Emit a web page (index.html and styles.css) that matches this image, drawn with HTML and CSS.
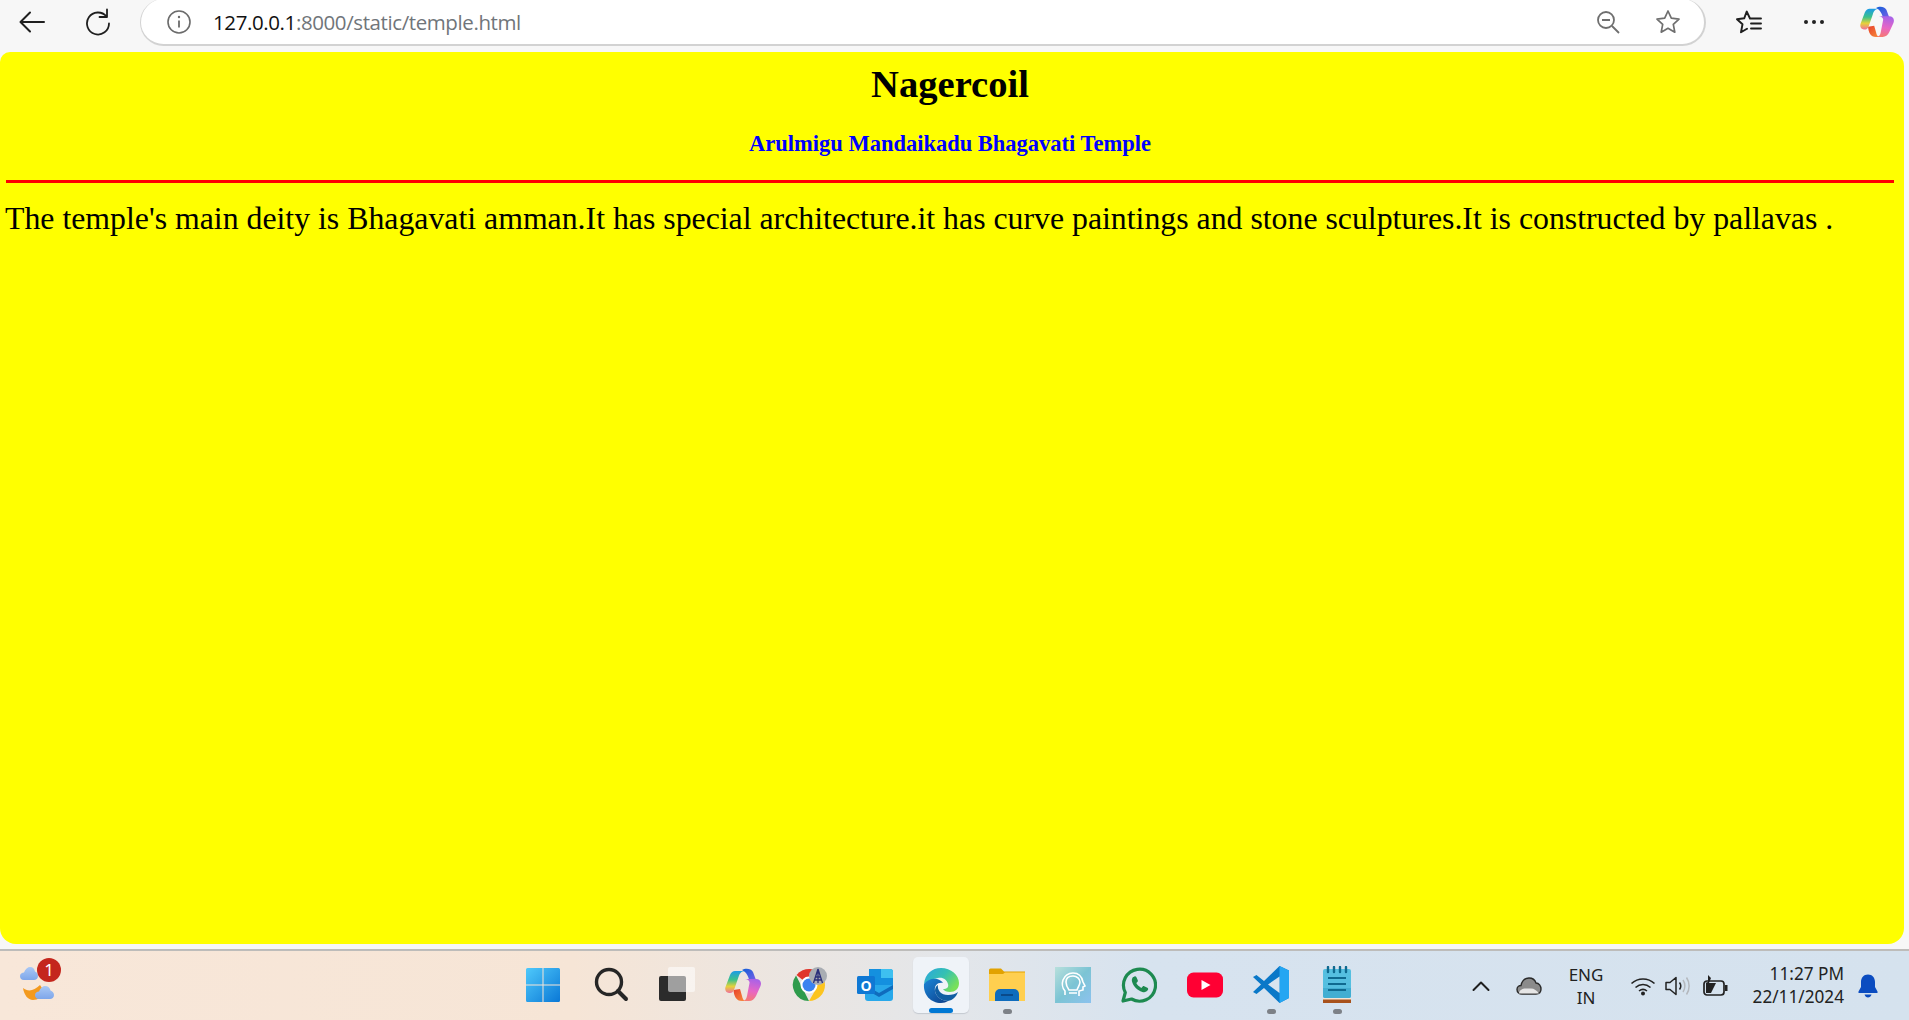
FILE: index.html
```html
<!DOCTYPE html>
<html lang="en">
<head>
<meta charset="utf-8">
<title>temple</title>
<link rel="stylesheet" href="styles.css">
</head>
<body>
<div class="screen">
  <header class="toolbar">
    <button class="tool back"><svg width="28" height="24" viewBox="0 0 28 24"><path d="M26 12H3M12 2.500 2.500 12l9.500 9.500" class="ln" stroke-width="2"/></svg></button>
    <button class="tool reload"><svg width="26" height="28" viewBox="0 0 26 28"><path d="M21.500 8.500A11 11 0 1 0 24 15.500M22 1.500v7.500h-7.500" class="ln" stroke-width="1.800"/></svg></button>
    <div class="address">
      <svg class="info" width="26" height="26" viewBox="0 0 26 26"><circle cx="13" cy="13" r="11" fill="none" stroke="#6b6b6b" stroke-width="1.600"/><path d="M13 11.500v7" stroke="#6b6b6b" stroke-width="1.800"/><circle cx="13" cy="8" r="1.200" fill="#6b6b6b"/></svg>
      <div class="url"><span class="host">127.0.0.1</span>:8000/static/temple.html</div>
      <svg class="zoomout" width="24" height="24" viewBox="0 0 24 24"><circle cx="10" cy="10" r="8" fill="none" stroke="#6f6f6f" stroke-width="1.800"/><path d="M6 10h8M16 16l7 7" stroke="#6f6f6f" stroke-width="1.800"/></svg>
      <svg class="star" width="26" height="26" viewBox="0 0 26 26"><path d="M13 2l3.300 7.200 7.700.9-5.700 5.300 1.500 7.800L13 19.300l-6.800 3.900 1.500-7.800L2 10.100l7.700-.9z" fill="none" stroke="#6f6f6f" stroke-width="1.700" stroke-linejoin="round"/></svg>
    </div>
    <svg class="favs" width="26" height="26" viewBox="0 0 26 26"><path d="M14 9.500 10.700 2.500 8.200 9.300 1 10.300l5.500 5-1.500 8 6-3.500M15 9.500h10M15 14.500h10M15 19.500h10" class="ln" stroke-width="1.900"/></svg>
    <svg class="more" width="22" height="6" viewBox="0 0 22 6"><circle cx="3" cy="3" r="2" fill="#222"/><circle cx="11" cy="3" r="2" fill="#222"/><circle cx="19" cy="3" r="2" fill="#222"/></svg>
    <svg class="copilot-top" width="34" height="31" viewBox="0 0 36 33">
      <defs>
        <linearGradient id="ca" x1="0" y1="0" x2="0" y2="1"><stop offset="0" stop-color="#1c9be8"/><stop offset=".4" stop-color="#3cc28a"/><stop offset=".7" stop-color="#e6d23a"/><stop offset="1" stop-color="#f0709a"/></linearGradient>
        <linearGradient id="cb" x1="0" y1="0" x2="1" y2="1"><stop offset="0" stop-color="#0d5fd8"/><stop offset="1" stop-color="#7a5fe6"/></linearGradient>
        <linearGradient id="cd" x1=".6" y1="0" x2=".4" y2="1"><stop offset="0" stop-color="#a862e8"/><stop offset=".55" stop-color="#e866c4"/><stop offset="1" stop-color="#f57a72"/></linearGradient>
        <linearGradient id="cc" x1="0" y1="0" x2="1" y2="1"><stop offset="0" stop-color="#e8402c"/><stop offset="1" stop-color="#f8903a"/></linearGradient>
      </defs>
      <path d="M17 2C20 0 26 0 28 4l3 8h-7c0-2-2-6-4-8z" fill="url(#cb)"/>
      <path d="M8.500 22C9 28 11 33 17 33h4c-2 0-3.500-2-4-5l-2-7z" fill="url(#cc)"/>
      <path d="M10 3h10c-4 0-5.500 3-6.500 6L9 22c-1 2-2 3-4 3H4c-3 0-4.500-3-3.500-6L5 7c1-2.500 3-4 5-4z" fill="url(#ca)"/>
      <path d="M20 11h11c4 0 6 3 4.500 7L31 28c-1.500 3-4 5-7 5H17c3 0 4.500-2 5-5l2.500-13c.5-2-2-4-4.500-4z" fill="url(#cd)"/>
    </svg>
  </header>

  <main class="viewport">
    <div class="page">
      <h1 class="title">Nagercoil</h1>
      <h3 class="subtitle">Arulmigu Mandaikadu Bhagavati Temple</h3>
      <hr class="rule">
      <p class="body-text">The temple's main deity is Bhagavati amman.It has special architecture.it has curve paintings and stone sculptures.It is constructed by pallavas .</p>
    </div>
  </main>

  <footer class="taskbar">
    <div class="widgets">
      <svg width="48" height="48" viewBox="0 0 48 48">
        <defs><linearGradient id="cl" x1="0" y1="0" x2="0" y2="1"><stop offset="0" stop-color="#a9c8f5"/><stop offset="1" stop-color="#7ea6ea"/></linearGradient></defs>
        <path d="M7 27c5 4 11 3 17-3l4 6c-2 6-6 9-11 9-5 0-9-5-10-12z" fill="#f39a1f"/>
        <path d="M8 19C5 19 4 17 4 15c0-2 2-3.500 4-3.500C9 8 12 6 14 6c3 0 4.500 2 5 4.500 2 .5 3 2.500 3 4.500 0 2.500-2 4-4 4z" fill="url(#cl)"/>
        <path d="M23 38c-3 0-4-2-4-4 0-2 2-3.500 4-3.500C24 27 27 25 29 25c3 0 5 2 5.500 4.500 2 .5 3.500 2.500 3.500 4.500 0 2.500-2 4-4 4z" fill="url(#cl)"/>
      </svg>
      <span class="badge">1</span>
    </div>
    <ul class="apps">
      <li class="app">
        <svg width="36" height="36" viewBox="0 0 36 36"><defs><linearGradient id="w" x1="0" y1="0" x2="1" y2="1"><stop offset="0" stop-color="#4fc9fb"/><stop offset="1" stop-color="#0a78d6"/></linearGradient></defs><path d="M1 2.500A1.500 1.500 0 0 1 2.500 1H17.500V17.500H1zM18.500 1H33.500A1.500 1.500 0 0 1 35 2.500V17.500H18.500zM1 18.500H17.500V35H2.500A1.500 1.500 0 0 1 1 33.500zM18.500 18.500H35V33.500A1.500 1.500 0 0 1 33.500 35H18.500z" fill="url(#w)"/></svg>
      </li>
      <li class="app">
        <svg width="36" height="36" viewBox="0 0 36 36"><circle cx="16" cy="15" r="12.500" fill="none" stroke="#262626" stroke-width="3.400"/><path d="M25 24l8 8" stroke="#262626" stroke-width="4" stroke-linecap="round"/></svg>
      </li>
      <li class="app">
        <svg width="36" height="36" viewBox="0 0 36 36"><rect x="0" y="9" width="27" height="25" rx="2" fill="#2b2b2b"/><rect x="9" y="0" width="27" height="25" rx="2" fill="#fff" fill-opacity=".55"/></svg>
      </li>
      <li class="app">
        <svg width="36" height="33" viewBox="0 0 36 33"><path d="M17 2C20 0 26 0 28 4l3 8h-7c0-2-2-6-4-8z" fill="url(#cb)"/><path d="M8.500 22C9 28 11 33 17 33h4c-2 0-3.500-2-4-5l-2-7z" fill="url(#cc)"/><path d="M10 3h10c-4 0-5.500 3-6.500 6L9 22c-1 2-2 3-4 3H4c-3 0-4.500-3-3.500-6L5 7c1-2.500 3-4 5-4z" fill="url(#ca)"/><path d="M20 11h11c4 0 6 3 4.500 7L31 28c-1.500 3-4 5-7 5H17c3 0 4.500-2 5-5l2.500-13c.5-2-2-4-4.500-4z" fill="url(#cd)"/></svg>
      </li>
      <li class="app">
        <svg width="36" height="36" viewBox="0 0 36 36"><path d="M18 18 5.500 8A16 16 0 0 1 32 10z" fill="#e0352b"/><path d="M18 18h16A16 16 0 0 1 18 34l7-12z" fill="#fcc41f"/><path d="M18 34A16 16 0 0 1 5 8.500L12 22z" fill="#2e9b4c"/><path d="M18 18 32 10A16 16 0 0 1 34 18z" fill="#fcc41f"/><circle cx="18" cy="18" r="8.500" fill="#fff"/><circle cx="18" cy="18" r="6.500" fill="#3b82f0"/><circle cx="27" cy="9" r="9" fill="#a9adb3"/><path d="M27 2 22.500 16M27 2l4.500 14M24.500 10h5M23.500 13h7M27 2v14" stroke="#2b2f7a" stroke-width="1.300" fill="none"/></svg>
      </li>
      <li class="app">
        <svg width="36" height="36" viewBox="0 0 36 36"><path d="M12 2h21a3 3 0 0 1 3 3v14H12z" fill="#1490df"/><path d="M24 2h9a3 3 0 0 1 3 3v6H24z" fill="#3ec0f0"/><path d="M8 18h28v13a3 3 0 0 1-3 3H11a3 3 0 0 1-3-3z" fill="#28a8ea"/><path d="M8 18l14 8 14-8v4L22 30 8 22z" fill="#0f6cbd"/><rect x="0" y="9" width="18" height="18" rx="1.500" fill="#0f78d4"/><text x="9" y="23.500" class="o-mark">O</text></svg>
      </li>
      <li class="app active">
        <svg width="36" height="36" viewBox="0 0 36 36"><defs><linearGradient id="e1" x1="0" y1="0" x2="1" y2=".6"><stop offset="0" stop-color="#2aa6e0"/><stop offset=".55" stop-color="#35c1b1"/><stop offset="1" stop-color="#78e05a"/></linearGradient><linearGradient id="e2" x1="0" y1="0" x2="1" y2="1"><stop offset="0" stop-color="#1b86d8"/><stop offset="1" stop-color="#0c3f8a"/></linearGradient></defs><path d="M1 17C2 7 9 1 18 1c10 0 18 7 18 15 0 6-4 9-9 9-3 0-6-1-7-3 4 0 6-2 5-5-1-4-5-7-10-6C9 12 4 14 1 17z" fill="url(#e1)"/><path d="M1 17c3-4 8-6 13-5 3 1 5 2 6 4-5-1-9 2-8 8 1 6 7 10 13 10-2 1-4 2-7 2C8 36 0 28 1 17z" fill="url(#e2)"/><path d="M25 34c-6 0-12-4-13-10 0-3 1-5 3-6-1 5 3 10 10 10 4 0 8-1 10-3-2 5-5 8-10 9z" fill="#115ea3"/></svg>
      </li>
      <li class="app running">
        <svg width="36" height="36" viewBox="0 0 36 36"><path d="M0 3a1.500 1.500 0 0 1 1.500-1.500H12l3 3H36V34H0z" fill="#e2a200"/><path d="M0 7h14l2-1.500h20V34H0z" fill="#ffcf4f"/><path d="M6 34V27a5 5 0 0 1 5-5h14a5 5 0 0 1 5 5v7z" fill="#0f6cbd"/><path d="M12 28h12" stroke="#0a3f7a" stroke-width="1.500"/></svg>
      </li>
      <li class="app">
        <svg width="36" height="36" viewBox="0 0 36 36"><defs><linearGradient id="t" x1="0" y1="0" x2="1" y2="1"><stop offset="0" stop-color="#b8e0dc"/><stop offset=".5" stop-color="#7cc4d4"/><stop offset="1" stop-color="#8cc2ee"/></linearGradient></defs><rect width="36" height="36" fill="url(#t)"/><path d="M10 28V24C7 21 7 16 8 13c2-5 6-7 10-7 6 0 9 4 10 9l2 4-2 1v3l-4 1v5" fill="none" stroke="#fff" stroke-width="1.600"/><path d="M14 23c-2-3-3-5-3-8 0-4 3-6 7-6s7 3 7 6c0 3-2 5-3 8zM14 23h8M14 26h8" fill="none" stroke="#fff" stroke-width="1.600"/></svg>
      </li>
      <li class="app">
        <svg width="36" height="36" viewBox="0 0 36 36"><path d="M2 34l2.300-8.500A16 16 0 1 1 10.500 32z" fill="none" stroke="#1d8a50" stroke-width="3.200" stroke-linejoin="round"/><path d="M12.500 10c1-1 2.300-1 2.800 0l1.500 3.300c.2.600 0 1.200-.4 1.600l-1.100 1.200c1 2 2.800 3.700 5 4.800l1.400-1.400c.4-.4 1-.5 1.500-.3l3.200 1.500c.9.400 1 1.500.4 2.400-1.300 1.900-3.200 2.500-5.500 1.800-5-1.500-9-5.500-10.300-10.400-.5-1.800.2-3.400 1-4.500z" fill="#1d8a50"/></svg>
      </li>
      <li class="app">
        <svg width="36" height="26" viewBox="0 0 36 26"><rect y=".5" width="36" height="25" rx="6.500" fill="#ff0033"/><path d="M14.500 8v10l9-5z" fill="#fff"/></svg>
      </li>
      <li class="app running">
        <svg width="36" height="37" viewBox="0 0 36 37"><path d="M26.500 0 36 4.500V32l-9.500 5L11 22l-7.500 6L0 26l8-7.500L0 11l3.500-2 7.500 6z" fill="#0a78c8"/><path d="M26.500 0 36 4.500V32l-9.500 5z" fill="#24a6f2"/><path d="M26.500 10.500 15 18.500l11.500 8.500z" fill="#d8e4ef"/></svg>
      </li>
      <li class="app running">
        <svg width="28" height="37" viewBox="0 0 28 37"><rect x="0" y="3" width="28" height="29" rx="2" fill="#55bfe0"/><path d="M0 22h28v8a2 2 0 0 1-2 2H2a2 2 0 0 1-2-2z" fill="#42aed2"/><rect y="32" width="28" height="5" fill="#a8521c"/><rect y="32" width="28" height="1.500" fill="#f2e4d4"/><path d="M5 1v5M11 1v5M17 1v5M23 1v5" stroke="#0f6a90" stroke-width="2.400" stroke-linecap="round"/><path d="M5 12h18M5 18h18M5 24h18" stroke="#0f6a90" stroke-width="2"/></svg>
      </li>
    </ul>
    <div class="tray">
      <svg class="chevron" width="18" height="12" viewBox="0 0 18 12"><path d="M1.500 10 9 2.500 16.500 10" class="ln" stroke-width="2"/></svg>
      <svg class="cloud" width="26" height="18" viewBox="0 0 26 18"><path d="M6 17C3 17 1 15 1 12.500S3 8.500 5 8.500C6 4 9 1 13 1c3 0 6 2 7 5 3 0 5 3 5 6 0 3-2 5-5 5z" fill="#8b8b8b" stroke="#2a2a2a" stroke-width="1.400"/><path d="M3 16.500c0-3 3-5 7-5h5c3 0 6 2 8 5z" fill="#e6e6e6"/></svg>
      <div class="lang"><span>ENG</span><span>IN</span></div>
      <svg class="wifi" width="26" height="20" viewBox="0 0 26 20"><path d="M1.500 7.500c6.500-6 16.500-6 23 0M5.500 11.500c4.500-4 10.500-4 15 0M9 15c2.500-2 5.500-2 8 0" fill="none" stroke="#222" stroke-width="1.600"/><circle cx="13" cy="17.500" r="2" fill="#222"/></svg>
      <svg class="sound" width="26" height="22" viewBox="0 0 26 22"><path d="M1 7.500h4L11 2.500v17l-6-5H1z" fill="none" stroke="#222" stroke-width="1.500" stroke-linejoin="round"/><path d="M14.500 7.500c1.500 2 1.500 5 0 7" fill="none" stroke="#222" stroke-width="1.500"/><path d="M18 5c2.500 3.500 2.500 8.500 0 12M21.500 2.500c3.500 5 3.500 12 0 17" fill="none" stroke="#b4b8bd" stroke-width="1.500"/></svg>
      <svg class="battery" width="26" height="22" viewBox="0 0 26 22"><rect x="1" y="6" width="20" height="14" rx="3" fill="none" stroke="#222" stroke-width="1.700"/><path d="M22 10h2.500v6H22z" fill="#222"/><path d="M3 18V8h10l-5 10z" fill="#222"/><path d="M5 0v7l-3 1 4 0 2-5z" fill="#222"/></svg>
      <div class="clock"><span>11:27 PM</span><span>22/11/2024</span></div>
      <svg class="bell" width="20" height="24" viewBox="0 0 20 24"><path d="M10 .500c-4.500 0-7 3.500-7 7.500v5L.5 17.500V19h19v-1.500L17 13V8c0-4-2.500-7.500-7-7.500z" fill="#0b4cc0"/><path d="M6.500 20.500h7c-.5 2-2 3-3.500 3s-3-1-3.500-3z" fill="#0b4cc0"/></svg>
    </div>
  </footer>
</div>
</body>
</html>
```

FILE: styles.css
```css
* { box-sizing: border-box; }
html, body { margin: 0; padding: 0; height: 100%; overflow: hidden; }
.screen { display: flex; flex-direction: column; height: 1020px; background: #f7f7f7; }
.ln { fill: none; stroke: #1f1f1f; stroke-linejoin: round; stroke-linecap: round; }

.toolbar { height: 52px; flex: none; display: flex; align-items: flex-start; background: #f7f7f7; }
.tool { border: 0; background: none; padding: 0; display: flex; align-items: center; justify-content: center; height: 44px; width: 40px; }
.back { margin-left: 12px; }
.reload { margin-left: 26px; }
.address { width: 1566px; height: 47px; margin-left: 22px; margin-top: -1px; display: flex; align-items: center; background: #fff; border: 2px solid #d2d2d2; border-top: 0; border-left-width: 1.500px; border-radius: 24px; padding-left: 25px; }
.url { font: 20.500px/44px "Open Sans", sans-serif; color: #70757a; margin-left: 21px; letter-spacing: -.4px; flex: 1; }
.host { color: #111; }
.zoomout { margin-right: 35px; }
.star { margin-right: 23px; }
.favs { margin-left: 30px; margin-top: 9px; }
.more { margin-left: 41px; margin-top: 19px; }
.copilot-top { margin-left: 35px; margin-top: 6px; }

.viewport { height: 899px; flex: none; padding-right: 5px; border-bottom: 2px solid #bdbcba; }
.page { height: 892px; background: #ff0; border-radius: 0 0 16px 16px; border-top-left-radius: 10px; border-top-right-radius: 14px; padding: 10px 10px 0 6px; font-family: "Liberation Serif", "Times New Roman", serif; color: #000; overflow: hidden; }
.title { margin: 0; font-size: 38.600px; line-height: 44px; font-weight: 700; text-align: center; }
.subtitle { margin: 25px 0 0; font-size: 22.500px; line-height: 26px; font-weight: 700; text-align: center; color: #00f; }
.rule { margin: 23px 0 0; height: 3px; border: 0; background: #f00; }
.body-text { margin: 19px 0 0 -1px; font-size: 31.800px; line-height: 34px; white-space: nowrap; }

.taskbar { flex: 1; display: flex; align-items: center; background: linear-gradient(90deg, #f8e7d9 0%, #f6e5d6 30%, #e3e6ea 50%, #d7e3ef 60%, #d5e2ee 100%); }
.widgets { width: 510px; flex: none; height: 100%; position: relative; padding: 10px 0 0 16px; }
.badge { position: absolute; left: 37px; top: 7px; width: 24px; height: 24px; border-radius: 50%; background: #c4261d; color: #fff; font: 17px/24px "Noto Sans", sans-serif; text-align: center; }
.apps { list-style: none; margin: 0; padding: 0; display: flex; flex: none; }
.app { width: 66px; height: 69px; padding-bottom: 2px; display: flex; align-items: center; justify-content: center; position: relative; }
.app:first-child { width: 68px; padding-right: 2px; }
.running::after { content: ""; position: absolute; left: 29px; bottom: 6px; width: 9px; height: 5px; border-radius: 3px; background: #7d8187; }
.active::before { content: ""; position: absolute; left: 5px; top: 6px; width: 56px; height: 56px; border-radius: 5px; background: #eff3f8; box-shadow: 0 1px 1px #c4c9d0; }
.active::after { content: ""; position: absolute; left: 21px; bottom: 7px; width: 24px; height: 5px; border-radius: 3px; background: #0078d4; }
.active svg { position: relative; }
.o-mark { font: 700 14px "Open Sans", sans-serif; fill: #fff; text-anchor: middle; }

.tray { flex: 1; display: flex; align-items: center; height: 100%; }
.chevron { margin-left: 102px; }
.cloud { margin-left: 26px; }
.lang { display: flex; flex-direction: column; align-items: center; width: 44px; margin-left: 22px; font: 17px/23px "Noto Sans", sans-serif; color: #222; }
.wifi { margin-left: 22px; }
.sound { margin-left: 9px; }
.battery { margin-left: 12px; }
.clock { display: flex; flex-direction: column; align-items: flex-end; width: 110px; margin-left: 5px; margin-bottom: 2px; font: 17.200px/23px "Noto Sans", sans-serif; color: #222; }
.bell { margin-left: 14px; }
```
